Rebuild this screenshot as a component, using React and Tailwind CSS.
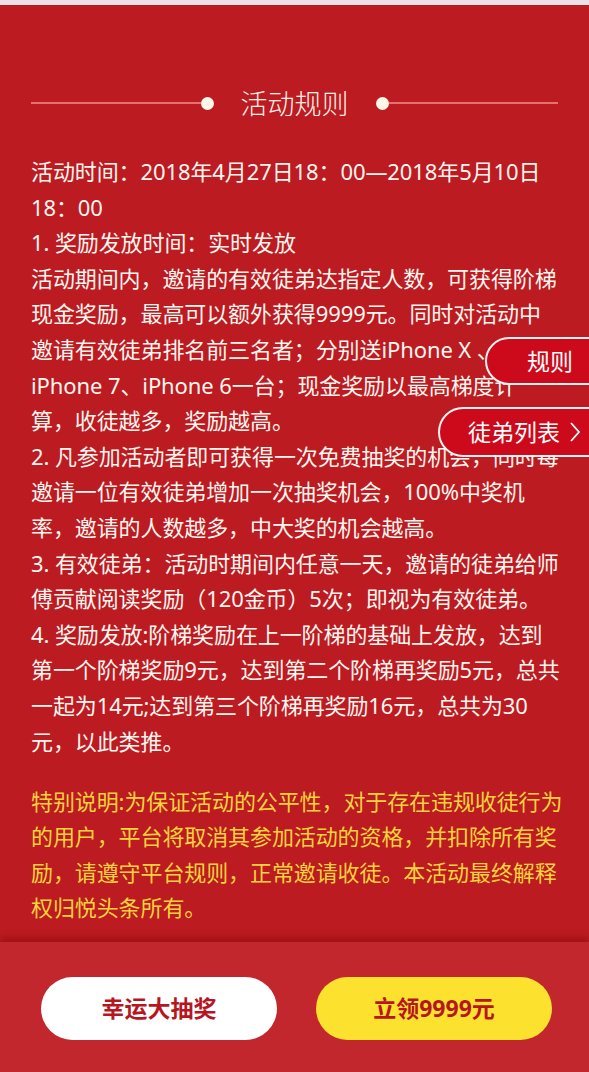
import React from "react";

const body = [
  "活动时间：2018年4月27日18：00—2018年5月10日",
  "18：00",
  "1. 奖励发放时间：实时发放",
  "活动期间内，邀请的有效徒弟达指定人数，可获得阶梯",
  "现金奖励，最高可以额外获得9999元。同时对活动中",
  "邀请有效徒弟排名前三名者；分别送iPhone X 、",
  "iPhone 7、iPhone 6一台；现金奖励以最高梯度计",
  "算，收徒越多，奖励越高。",
  "2. 凡参加活动者即可获得一次免费抽奖的机会，同时每",
  "邀请一位有效徒弟增加一次抽奖机会，100%中奖机",
  "率，邀请的人数越多，中大奖的机会越高。",
  "3. 有效徒弟：活动时期间内任意一天，邀请的徒弟给师",
  "傅贡献阅读奖励（120金币）5次；即视为有效徒弟。",
  "4. 奖励发放:阶梯奖励在上一阶梯的基础上发放，达到",
  "第一个阶梯奖励9元，达到第二个阶梯再奖励5元，总共",
  "一起为14元;达到第三个阶梯再奖励16元，总共为30",
  "元，以此类推。",
];

const special = [
  "特别说明:为保证活动的公平性，对于存在违规收徒行为",
  "的用户，平台将取消其参加活动的资格，并扣除所有奖",
  "励，请遵守平台规则，正常邀请收徒。本活动最终解释",
  "权归悦头条所有。",
];

const font = { fontFamily: '"Noto Sans", "Noto Sans CJK SC", sans-serif' };

export default function App() {
  return (
    <div className="relative w-[589px] h-[1072px] overflow-hidden bg-[#bb1b21]" style={font}>
      <div className="h-[5px] bg-[#ebe1e6]" />
      <div className="px-[31px] pt-[78px]">
        <div className="flex items-center h-[40px]">
          <div className="flex-1 h-[1.5px] bg-[#e7716f]" />
          <div className="w-[13px] h-[13px] rounded-full bg-[#fff8e8]" />
          <div className="px-[27px] text-[27px] font-light text-[#fff3ea] leading-none whitespace-nowrap">活动规则</div>
          <div className="w-[13px] h-[13px] rounded-full bg-[#fff8e8]" />
          <div className="flex-1 h-[1.5px] bg-[#e7716f]" />
        </div>
        <div className="mt-[31px] text-[22px] leading-[35.6px] text-[#fff6f0] tracking-[-0.1px]">
          {body.map((l, i) => (
            <div key={i} className="whitespace-nowrap">{l}</div>
          ))}
        </div>
        <div className="mt-[25px] text-[22px] leading-[35.2px] text-[#fcd33c] tracking-[-0.1px]">
          {special.map((l, i) => (
            <div key={i} className="whitespace-nowrap">{l}</div>
          ))}
        </div>
      </div>

      <div className="absolute left-0 right-0 bottom-0 h-[130px] bg-[#c1272d] shadow-[0_-5px_6px_rgba(120,0,0,0.35)] flex justify-between pl-[41px] pr-[37px] pt-[35px]">
        <div className="w-[236px] h-[63px] rounded-full bg-white flex items-center justify-center text-[23px] font-bold text-[#b5161f]">幸运大抽奖</div>
        <div className="w-[236px] h-[63px] rounded-full bg-[#fde12f] flex items-center justify-center text-[23px] font-bold text-[#b5161f]">立领9999元</div>
      </div>

      <div className="absolute left-[485px] top-[337px] w-[130px] h-[48px] rounded-l-full border-2 border-[#fff3f3] bg-[#cc0a1c] flex items-center pl-[40px] text-[23px] text-white">规则</div>
      <div className="absolute left-[438px] top-[407px] w-[170px] h-[50px] rounded-l-full border-2 border-[#fff3f3] bg-[#cc0a1c] flex items-center pl-[28px] text-[23px] text-white whitespace-nowrap">
        <span>徒弟列表</span>
        <svg className="ml-[9px]" width="12" height="22" viewBox="0 0 12 22" fill="none">
          <path d="M2 2 L10 11 L2 20" stroke="white" strokeWidth="1.8" />
        </svg>
      </div>
    </div>
  );
}
